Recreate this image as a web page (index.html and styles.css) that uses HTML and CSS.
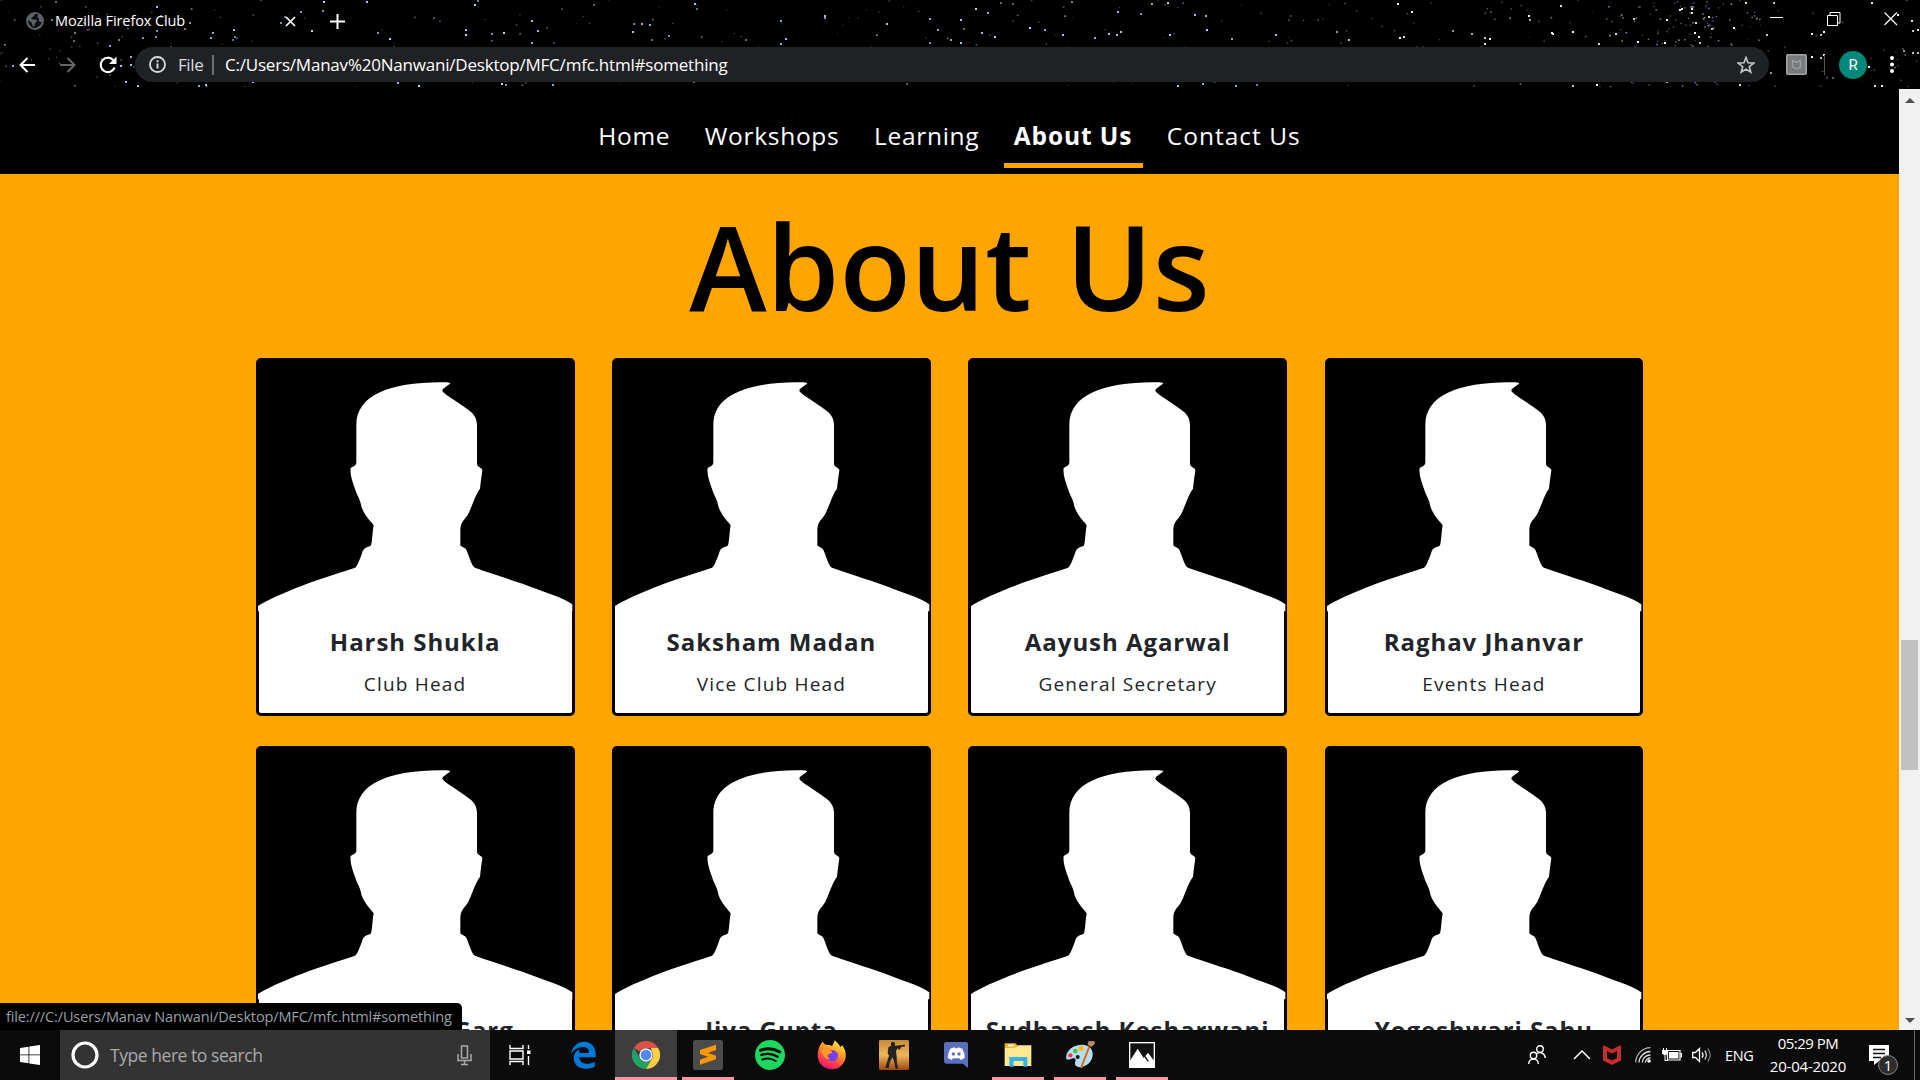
FILE: index.html
```html
<!DOCTYPE html>
<html lang="en">
<head>
<meta charset="utf-8">
<title>Mozilla Firefox Club</title>
<link rel="stylesheet" href="styles.css">
</head>
<body>
<svg class="defs" width="0" height="0" aria-hidden="true">
  <symbol id="person" viewBox="48 39 957 1073" preserveAspectRatio="none">
    <path fill="#fff" d="M54 782C80 765 130 743 190 720C240 701 300 683 345 668C352 664 362 636 368 618C374 604 388 606 393 600C397 590 397 560 401 541C395 530 375 515 364 484C361 462 350 450 346 434C338 412 329 388 332 369C338 364 348 363 349 352V240C349 150 450 113 600 112C612 111 626 111 631 114C626 122 608 128 607 137C610 145 640 163 662 178C690 198 710 206 711 240V356C712 368 726 366 727 376C724 396 722 412 720 431C706 449 698 480 684 508C674 524 662 530 661 552V601C666 606 676 606 680 616C690 640 694 660 705 668C760 688 830 708 890 731C940 750 972 759 997 777V798H54Z"/>
  </symbol>
</svg>

<div class="screen">
  <header class="chrome">
    <svg class="stars" width="1920" height="88" aria-hidden="true"></svg>
    <div class="tabs">
      <svg class="globe" width="18" height="18" viewBox="0 0 18 18"><circle cx="9" cy="9" r="9" fill="#5f6368"/><path d="M10 1.8C8 2.5 8.500 4 7 5C5 5.500 5 7 6.500 7.500H9.500C11.500 8 11 10 9.500 10.500C8.500 11 9 13 8 14.500C6 14 6.500 11.500 5 10L2 8C1.800 12 5 16 9 16.100C12 15.500 15.500 13 15.800 10C14 10.500 12.500 9.500 13 8C13.500 6.500 12 6 11.500 5C11 4 12.500 3.500 12.500 2.800Z" fill="#000" opacity=".85"/></svg>
      <span class="tab-title">Mozilla Firefox Club</span>
      <svg class="tab-close" width="11" height="11" viewBox="0 0 11 11"><path d="M1 1L10 10M10 1L1 10" stroke="#fff" stroke-width="1.7"/></svg>
      <svg class="tab-new" width="15" height="15" viewBox="0 0 15 15"><path d="M7.500 0V15M0 7.500H15" stroke="#fff" stroke-width="2"/></svg>
      <div class="winctl">
        <svg width="14" height="14" viewBox="0 0 14 14"><path d="M0 5.500H13" stroke="#fff"/></svg>
        <svg width="14" height="14" viewBox="0 0 14 14"><path d="M.5 3.500H10.500V13.500H.5ZM3 3V.5H13V11H11" fill="none" stroke="#fff"/></svg>
        <svg width="14" height="14" viewBox="0 0 14 14"><path d="M.5 .5L13 13M13 .5L.5 13" stroke="#fff" stroke-width="1.200"/></svg>
      </div>
    </div>
    <div class="toolbar">
      <svg class="back" width="16" height="16" viewBox="0 0 16 16"><path d="M16 8H1.500M8.500 1L1.500 8L8.500 15" fill="none" stroke="#fff" stroke-width="2"/></svg>
      <svg class="fwd" width="16" height="16" viewBox="0 0 16 16"><path d="M0 8H14.500M7.500 1L14.500 8L7.500 15" fill="none" stroke="#666" stroke-width="2"/></svg>
      <svg class="reload" width="18" height="18" viewBox="0 0 18 18"><path d="M14.200 4A7.200 7.200 0 1 0 15.600 11.500" fill="none" stroke="#fff" stroke-width="2.100"/><path d="M17.500 .5V8H10Z" fill="#fff"/></svg>
      <div class="address">
        <svg width="17" height="17" viewBox="0 0 17 17"><circle cx="8.500" cy="8.500" r="7.500" fill="none" stroke="#dadce0" stroke-width="1.800"/><path d="M8.500 7.500V12.500M8.500 4.300V6.200" stroke="#dadce0" stroke-width="1.900"/></svg>
        <span class="scheme">File</span>
        <i class="sep"></i>
        <span class="url">C:/Users/Manav%20Nanwani/Desktop/MFC/mfc.html#something</span>
        <svg class="fav" width="18" height="18" viewBox="0 0 18 18"><path d="M9 1.500L11 6.800L16.800 7.100L12.300 10.700L13.800 16.200L9 13.100L4.200 16.200L5.700 10.700L1.200 7.100L7 6.800Z" fill="none" stroke="#c4c7ca" stroke-width="1.600"/></svg>
      </div>
      <svg class="ext" width="21" height="21" viewBox="0 0 21 21"><rect x=".75" y=".75" width="19.500" height="19.500" rx="1" fill="#77797b" stroke="#a3a6a8" stroke-width="1.500"/><path d="M6.500 6.500L10.500 8.500L14.500 6.500V13L10.500 15L6.500 13Z" fill="none" stroke="#9b9ea0" stroke-width="1.500"/></svg>
      <i class="bar"></i>
      <span class="avatar">R</span>
      <svg class="dots" width="4" height="17" viewBox="0 0 4 17"><g fill="#fff"><circle cx="2" cy="2" r="2"/><circle cx="2" cy="8.500" r="2"/><circle cx="2" cy="15" r="2"/></g></svg>
    </div>
  </header>

  <main class="view">
    <div class="page">
      <nav class="nav">
        <a>Home</a><a>Workshops</a><a>Learning</a><a class="active">About Us</a><a>Contact Us</a>
      </nav>
      <h1 class="title">About Us</h1>
      <section class="grid">
        <article class="card"><svg class="photo"><use href="#person"/></svg><h2>Harsh Shukla</h2><p>Club Head</p></article>
        <article class="card"><svg class="photo"><use href="#person"/></svg><h2>Saksham Madan</h2><p>Vice Club Head</p></article>
        <article class="card"><svg class="photo"><use href="#person"/></svg><h2>Aayush Agarwal</h2><p>General Secretary</p></article>
        <article class="card"><svg class="photo"><use href="#person"/></svg><h2>Raghav Jhanvar</h2><p>Events Head</p></article>
        <article class="card"><svg class="photo"><use href="#person"/></svg><h2 class="covered">Garg</h2></article>
        <article class="card"><svg class="photo"><use href="#person"/></svg><h2>Jiya Gupta</h2></article>
        <article class="card"><svg class="photo"><use href="#person"/></svg><h2>Sudhansh Kesharwani</h2></article>
        <article class="card"><svg class="photo"><use href="#person"/></svg><h2>Yogeshwari Sahu</h2></article>
      </section>
    </div>
    <div class="scroll">
      <i class="up"></i><i class="thumb"></i><i class="down"></i>
    </div>
    <div class="status">file:///C:/Users/Manav Nanwani/Desktop/MFC/mfc.html#something</div>
  </main>

  <footer class="taskbar">
    <div class="start"><svg width="20" height="20" viewBox="0 0 20 20"><path fill="#fff" d="M0 3L8.500 1.700V9.500H0ZM9.300 1.600L20 0V9.500H9.300ZM0 10.300H8.500V18.200L0 17ZM9.300 10.300H20V20L9.300 18.400Z"/></svg></div>
    <div class="search">
      <svg width="28" height="28" viewBox="0 0 28 28"><circle cx="14" cy="14" r="12" fill="none" stroke="#fff" stroke-width="3.200"/></svg>
      <span>Type here to search</span>
      <svg class="mic" width="15" height="21" viewBox="0 0 15 21"><path d="M4.500 1H10.500V13H4.500ZM1 9V15.500H14V9M7.500 15.500V19.500M4 19.500H11" fill="none" stroke="#aaa" stroke-width="1.500"/></svg>
    </div>
    <div class="slot taskview"><svg width="22" height="20" viewBox="0 0 22 20"><path d="M1 0V3.500H14V0M1 20V16.500H14V20M1 6H14V14H1ZM19.500 0V4M19.500 11V20" fill="none" stroke="#fff" stroke-width="1.400"/><rect x="18" y="5.500" width="3.500" height="3.500" fill="#fff"/></svg></div>
    <div class="slot"><svg width="30" height="30" viewBox="0 0 90 90"><path fill="#0078d7" d="M6 42C10 18 26 5 45 5C67 5 80 20 80 42V52H31C32 65 40 71 53 71C62 71 70 69 77 65V80C68 84 60 86 50 86C28 86 14 73 14 54C14 41 22 32 33 27C28 32 31 38 31 39H60C60 28 54 21 42 21C26 21 14 30 6 42Z"/></svg></div>
    <div class="slot run cur"><svg width="28" height="28" viewBox="0 0 48 48"><path fill="#dd5144" d="M24 0A24 24 0 0 1 44.800 12H24A12 12 0 0 0 13.600 18L3.200 12A24 24 0 0 1 24 0Z"/><path fill="#1da362" d="M3.200 12A24 24 0 0 0 24 48L34.400 30A12 12 0 0 1 13.600 30Z"/><path fill="#ffce42" d="M44.800 12A24 24 0 0 1 24 48L34.400 30A12 12 0 0 0 34.400 18L32 12Z"/><circle cx="24" cy="24" r="11.500" fill="#f1f1f1"/><circle cx="24" cy="24" r="9" fill="#4c8bf5"/></svg></div>
    <div class="slot run"><svg width="30" height="30" viewBox="0 0 90 90"><rect width="90" height="90" rx="7" fill="#4b4b4b"/><path fill="#ff9800" d="M21 30L69 14V30L45 39L69 47V58L21 74V59L45 50L21 42Z"/></svg></div>
    <div class="slot"><svg width="30" height="30" viewBox="0 0 90 90"><circle cx="45" cy="45" r="45" fill="#1ed760"/><g fill="none" stroke="#0c0b0a" stroke-linecap="round"><path d="M16 31Q47 20 74 36" stroke-width="9"/><path d="M19 45Q45 36 68 50" stroke-width="7"/><path d="M22 59Q43 51 62 63" stroke-width="6"/></g></svg></div>
    <div class="slot"><svg width="30" height="30" viewBox="0 0 90 90"><defs><linearGradient id="fx" x1=".8" y1="0" x2=".3" y2="1"><stop offset="0" stop-color="#fff44f"/><stop offset=".4" stop-color="#ff9a20"/><stop offset=".75" stop-color="#ff3b4e"/><stop offset="1" stop-color="#e01080"/></linearGradient></defs><path fill="url(#fx)" d="M8 18C12 12 14 8 18 5C20 12 26 14 32 15C39 15 43 16 45 19L54 1C60 9 66 12 71 22L75 15C84 27 88 40 86 51C83 73 66 88 45 88C22 88 4 72 2 48C2 34 5 26 8 18Z"/><circle cx="46" cy="47" r="17" fill="#7542e5"/><path fill="#ff9a20" d="M12 30C22 26 38 28 46 36C44 41 36 40 33 44C30 49 34 54 39 57C27 60 16 48 12 30Z"/></svg></div>
    <div class="slot"><svg width="30" height="30" viewBox="0 0 90 90"><defs><linearGradient id="cs" x1="0" y1="0" x2="0" y2="1"><stop offset="0" stop-color="#c98a35"/><stop offset=".5" stop-color="#eeb65c"/><stop offset="1" stop-color="#9c4614"/></linearGradient></defs><rect width="90" height="90" rx="4" fill="url(#cs)"/><path fill="#24231f" d="M36 8C40 3 48 5 48 12L47 17L78 14V19L66 21L62 30L56 25L51 33L53 49L54 70L58 86H50L45 62L40 52L32 68L29 84H19L24 66L30 47L26 40L28 22L36 17Z"/></svg></div>
    <div class="slot"><svg width="26" height="28" viewBox="0 0 78 84"><path fill="#5c6fbd" d="M10 3H68Q75 3 75 10V81L60 68H10Q3 68 3 61V10Q3 3 10 3Z"/><path fill="#fff" d="M22 23L34 19L37 22H43L46 19L58 23Q66 38 65 51L53 57L49 52H30L26 57L14 51Q14 36 22 23Z"/><circle cx="31" cy="39" r="5" fill="#5c6fbd"/><circle cx="48" cy="39" r="5" fill="#5c6fbd"/></svg></div>
    <div class="slot run"><svg width="28" height="26" viewBox="0 0 84 78"><path fill="#ffb900" d="M2 4H34L40 10L36 16H2Z"/><rect x="12" y="8" width="18" height="5" fill="#fff"/><path fill="#ffe794" d="M2 16H34L42 10H82V72H2Z"/><path fill="#39b2e8" d="M16 74V45H70V74H58V57H29V74Z"/></svg></div>
    <div class="slot run"><svg width="30" height="30" viewBox="0 0 90 90"><path fill="#b5dcf0" d="M4 57C-1 30 33 9 59 15C91 20 89 60 66 74C48 85 32 83 30 73C29 65 36 60 28 55C20 52 14 63 4 57Z"/><circle cx="16" cy="46" r="6.500" fill="#e84040"/><circle cx="31" cy="33" r="7" fill="#57b947"/><circle cx="48" cy="25" r="8" fill="#ffb61c"/><circle cx="38" cy="51" r="6" fill="#141414"/><path stroke="#d66b16" stroke-width="6" d="M73 20L48 84"/><path fill="#b98b62" d="M70 4L88 3L90 11L79 21L68 14Z"/></svg></div>
    <div class="slot run"><svg width="26" height="26" viewBox="0 0 78 78"><rect x="2" y="2" width="74" height="74" fill="#111" stroke="#fff" stroke-width="4"/><path fill="#fff" d="M2 58L26 20L44 48L57 32L76 58V76H2Z"/><path d="M42 36L58 58" stroke="#111" stroke-width="4"/></svg></div>

    <div class="tray">
      <svg width="18" height="20" viewBox="0 0 18 20"><g fill="none" stroke="#fff" stroke-width="1.400"><circle cx="12" cy="4" r="3.300"/><circle cx="5.500" cy="10.500" r="3.200"/><path d="M.7 19C1 12.500 10 12.500 10.300 19M9 8.500C12 6.500 17 8 17.300 13"/></g></svg>
      <svg class="chev" width="18" height="10" viewBox="0 0 18 10"><path d="M1 9L9 1L17 9" fill="none" stroke="#fff" stroke-width="1.500"/></svg>
      <svg class="mcafee" width="18" height="20" viewBox="0 0 18 20"><path fill="#c52d2e" d="M0 0L9 4.500L18 0V15.500L9 20L0 15.500ZM4 6V13L9 15.500L14 13V6L9 8.500Z" fill-rule="evenodd"/></svg>
      <svg class="wifi" width="16" height="16" viewBox="0 0 16 16"><g fill="none" stroke="#ddd" stroke-width="1.300"><path d="M.7 15.500A15 15 0 0 1 15.500 .7" opacity=".8"/><path d="M4 15.500A11.500 11.500 0 0 1 15.500 4.500M7.300 15.500A8 8 0 0 1 15.500 8M10.300 15.500A5 5 0 0 1 15.500 11"/></g><circle cx="14" cy="14" r="1.800" fill="#fff"/></svg>
      <svg class="batt" width="20" height="14" viewBox="0 0 20 14"><path d="M5.500 2.500H18V12H5.500Z" fill="none" stroke="#fff" stroke-width="1.200"/><path fill="#fff" d="M7 4H16.500V10.500H7ZM18.500 5H20V9.500H18.500ZM0 2H6V5.500L4 7H2L0 5.500ZM1 0H2V2H1ZM4 0H5V2H4ZM2.500 7H3.500V12H6V13H2.500Z"/></svg>
      <svg class="vol" width="20" height="16" viewBox="0 0 20 16"><g fill="none" stroke="#fff" stroke-width="1.300"><path d="M.7 5.500H3.500L7.500 1.500V14.500L3.500 10.500H.7ZM10 5.500Q12 8 10 10.500"/><path d="M12.800 3.500Q16 8 12.800 12.500" opacity=".8"/><path d="M15.800 1.500Q20.500 8 15.800 14.500" opacity=".45"/></g></svg>
      <span class="lang">ENG</span>
      <div class="clock"><span class="time">05:29 PM</span><span>20-04-2020</span></div>
      <div class="notif"><svg width="20" height="20" viewBox="0 0 20 20"><path fill="#fff" d="M0 0H20V16H10L5 20V16H0Z"/><path d="M4 4.500H16M4 8.500H16M4 12.500H12" stroke="#111" stroke-width="1.400"/></svg><b>1</b></div>
    </div>
  </footer>
</div>
<script src="stars.js"></script>
</body>
</html>
```
FILE: stars.js
```js
// Night sky behind the tab strip and toolbar: x, y, opacity.
const bright = [
  [5,45,.5],[13,66,.8],[56,2,.5],[52,20,.6],[75,33,.6],[74,41,.5],[84,23,.4],[110,46,.8],[119,40,.6],[121,66,.9],[131,57,.8],[131,65,.9],
  [126,82,.9],[138,86,.9],[157,7,.9],[161,16,.6],[157,31,.7],[156,37,.7],[143,38,.7],[190,23,.7],[185,29,.6],[213,33,.8],[211,38,.8],
  [199,86,.8],[206,85,.9],[234,30,.9],[235,37,.6],[233,40,.5],[253,82,.9],[264,81,.6],[281,23,.7],[285,17,.6],[301,12,.7],[312,31,1],
  [324,2,1],[323,11,.7],[367,2,.9],[378,33,.7],[390,39,1],[398,83,.9],[419,86,1],[434,18,.4],[466,30,.9],[466,35,1],[475,5,1],[478,1,.6],
  [492,34,.7],[504,33,1],[502,84,1],[506,85,.7],[532,21,.9],[538,31,.9],[532,43,.8],[553,85,.8],[594,5,.5],[633,32,.9],[634,24,.6],
  [642,24,.8],[650,25,.8],[652,40,.5],[669,36,.7],[695,4,.9],[697,9,.5],[746,40,.5],[781,21,.8],[781,44,.8],[786,39,.9],[825,16,.9],[825,18,.7],
  [887,24,.9],[877,35,.5],[930,19,.8],[938,30,.8],[930,43,.7],[951,40,.8],[961,20,.9],[961,43,.9],[964,29,.5],[976,9,1],[982,33,.9],[988,13,.8],
  [995,37,1],[1001,3,.5],[1013,4,.5],[1030,28,1],[1045,30,.8],[1063,35,.9],[1072,2,.6],[1095,38,.8],[1109,34,.9],[1117,35,.9],[1121,32,.9],
  [1118,12,.9],[1141,14,.7],[1152,4,.8],[1168,3,1],[1170,35,1],[1195,15,.9],[1206,16,.8],[1207,30,1],[1232,39,.8],[1276,35,.9],[694,82,.6],
  [1203,84,.8],[1178,86,.9],[1236,86,.8],[1257,85,.6],[1337,32,.6],[1349,40,.8],[1398,4,1],[1400,38,1],[1412,12,1],[1404,37,.9],[1453,31,.6],
  [1472,34,.7],[1485,38,.8],[1485,44,.9],[1490,39,1],[1529,16,1],[1530,20,.7],[1552,33,1],[1553,34,1],[1561,6,.9],[1573,32,1],[1599,44,.9],
  [1616,34,.9],[1634,19,.8],[1638,42,1],[1667,20,1],[1680,10,1],[1682,9,1],[1692,9,1],[1692,13,.9],[1696,23,.9],[1695,33,1],[1699,37,1],
  [1665,43,1],[1700,43,.8],[1709,17,.9],[1712,29,.8],[1734,28,1],[1767,35,.8],[1774,3,.8],[1812,34,1],[1821,35,.8],[1824,32,1],[1824,55,1],
  [1812,57,1],[1821,58,.8],[1746,3,.9],[1872,3,1],[1898,15,1],[1912,21,.9],[1913,31,.8],[1918,30,.9],[1904,51,.6],[1913,53,.8],[1918,53,.8],
  [1869,67,1],[1771,73,.6],[1573,86,.8],[1597,85,1],[1667,82,.7],[1740,85,.9],[1875,86,.9],[1882,86,1],[1833,78,.4]
];
// Faint dust: [x start, x end, count].
const dust = [[0,240,60],[240,640,55],[640,1280,90],[1280,1520,55],[1520,1600,28],[1600,1670,60],[1670,1720,80],[1720,1760,35],[1760,1920,30]];
let seed = 7;
const rnd = () => (seed = (seed * 16807) % 2147483647) / 2147483647;
const sky = document.querySelector('.stars');
const draw = (x, y, o, s, c) => {
  const r = document.createElementNS('http://www.w3.org/2000/svg', 'rect');
  r.setAttribute('x', x - s / 2); r.setAttribute('y', y - s / 2);
  r.setAttribute('width', s); r.setAttribute('height', s);
  r.setAttribute('fill', c); r.setAttribute('opacity', o);
  sky.appendChild(r);
};
for (const [a, b, n] of dust)
  for (let i = 0; i < n; i++)
    draw(a + rnd() * (b - a), rnd() * 87, (a >= 1600 && a < 1760 ? .4 : .25) + rnd() * .4, 1 + rnd() * .8, rnd() < .5 ? '#8fa0d8' : '#c3ced6');
for (const [x, y, o] of bright) draw(x, y, o, 2, x < 1300 ? '#b9d3f5' : '#eef6fa');
```
FILE: styles.css
```css
* { box-sizing: border-box; }
body { margin: 0; background: #000; font-family: "Open Sans", "Noto Sans", sans-serif; overflow: hidden; }
svg, i { display: block; flex: none; }
.defs { position: absolute; }
.screen { width: 1920px; height: 1080px; display: flex; flex-direction: column; overflow: hidden; }

.chrome { position: relative; height: 89px; flex: none; background: #000; color: #fff; }
.stars { position: absolute; left: 0; top: 0; }
.tabs, .toolbar { position: relative; display: flex; align-items: center; }
.tabs { height: 42px; padding-left: 26px; }
.tab-title { width: 130px; margin-left: 11px; font-size: 14.5px; line-height: 20px; letter-spacing: -.1px; white-space: nowrap; }
.tab-close { margin-left: 100px; }
.tab-new { margin-left: 34px; }
.winctl { display: flex; gap: 43px; margin-left: auto; padding-right: 22px; height: 18px; }
.toolbar { height: 47px; padding: 5px 26px 7px 19px; }
.fwd { margin-left: 25px; }
.reload { margin-left: 23px; }
.address { width: 1634px; height: 35px; margin-left: 18px; padding: 0 14px; display: flex; align-items: center; border-radius: 18px; background: #202124; font-size: 17px; white-space: nowrap; }
.scheme { margin-left: 12px; width: 25px; color: #dadce0; letter-spacing: -.4px; }
.sep { width: 2px; height: 20px; margin-left: 9px; background: #6b6e72; }
.url { margin-left: 11px; letter-spacing: -.21px; }
.fav { margin-left: auto; }
.ext { margin-left: 17px; }
.bar { width: 1px; height: 20px; margin-left: 17px; background: #55585b; }
.avatar { width: 28px; height: 28px; margin-left: 14px; border-radius: 50%; background: #00897b; font: 15px/28px Roboto, sans-serif; text-align: center; }
.dots { margin-left: auto; }

.view { position: relative; display: flex; height: 941px; flex: none; overflow: hidden; }
.page { width: 1899px; height: 941px; overflow: hidden; background: #ffa500; }
.nav { display: flex; justify-content: center; gap: 14px; height: 85px; padding-top: 22px; background: #000; color: #fff; font-size: 24.5px; letter-spacing: .7px; }
.nav a { height: 57px; padding: 0 10.25px; line-height: 49px; border-bottom: 5px solid transparent; white-space: nowrap; }
.nav a:last-child { letter-spacing: 1px; }
.nav .active { font-weight: 700; letter-spacing: .9px; border-color: #ffa500; }
.title { height: 184px; margin: 0; padding-top: 17px; color: #000; font-size: 117px; font-weight: 600; line-height: 150px; letter-spacing: 0; word-spacing: 4px; text-align: center; white-space: nowrap; }
.grid { display: grid; grid-template-columns: repeat(4, 318.75px); gap: 30px 37.5px; justify-content: center; }
.card { position: relative; height: 357.8px; border: 3px solid #000; border-radius: 5px; background: linear-gradient(#000 250px, #fff 250px); color: #212529; text-align: center; white-space: nowrap; }
.photo { width: 319px; height: 358px; margin: -3px -3px -92px; }
.card + .card .photo { margin-left: -2.5px; }
.card h2 { margin: 0; font-size: 24px; font-weight: 700; line-height: 35px; letter-spacing: .95px; }
.card p { margin: 11px 0 0; font-size: 19px; font-weight: 400; line-height: 28px; letter-spacing: 1.2px; }
.card .covered { padding-left: 137px; }
.scroll { width: 21px; height: 941px; display: flex; flex-direction: column; align-items: center; background: #f1f1f1; }
.up, .down { border: 5px solid transparent; }
.up { margin-top: 4px; border-bottom-color: #505050; }
.thumb { width: 17px; height: 130px; margin-top: 537px; background: #c1c1c1; }
.down { margin-top: auto; margin-bottom: 2px; border-top-color: #505050; }
.status { position: absolute; left: 0; bottom: 0; width: 462px; height: 27px; padding-left: 6px; border-top-right-radius: 5px; background: #000; color: #9aa0a6; font-size: 14.500px; line-height: 27px; letter-spacing: -.13px; white-space: nowrap; }

.taskbar { display: flex; height: 50px; flex: none; background: #0c0b0b; color: #fff; }
.start { width: 60px; display: flex; align-items: center; justify-content: center; }
.search { width: 430px; height: 50px; padding: 0 18px 0 11px; display: flex; align-items: center; background: #333; color: #aaa; font-size: 17.500px; letter-spacing: -.45px; white-space: nowrap; }
.search span { margin-left: 11px; }
.mic { margin-left: auto; }
.slot { position: relative; width: 62px; height: 50px; display: flex; align-items: center; justify-content: center; }
.taskview { width: 63px; padding-right: 3px; }
.cur { background: #3e3d3d; }
.run::after { content: ""; position: absolute; left: 5px; right: 5px; bottom: 0; height: 3px; background: #ff98a2; }
.cur::after { left: 0; right: 0; }
.tray { display: flex; align-items: center; margin-left: auto; padding-right: 4px; font-size: 15px; white-space: nowrap; border-right: 1px solid #0c0b0b; }
.chev { margin-left: 27px; }
.mcafee { margin-left: 12px; }
.wifi { margin-left: 14px; }
.batt { margin-left: 11px; }
.vol { margin-left: 10px; }
.lang { width: 28px; margin-left: 13px; font-size: 14.500px; letter-spacing: -.4px; }
.clock { width: 80px; margin-left: 15px; display: flex; flex-direction: column; align-items: center; line-height: 23px; letter-spacing: -.2px; }
.time { letter-spacing: -.5px; }
.notif { position: relative; width: 46px; height: 50px; margin-left: 21px; padding-top: 15px; border-right: 1px solid #666; }
.notif b { position: absolute; left: 9px; top: 25px; width: 20px; height: 20px; border: 1px solid #888; border-radius: 50%; background: #2d2d2d; font-size: 15px; font-weight: 400; line-height: 18px; text-align: center; }
```
